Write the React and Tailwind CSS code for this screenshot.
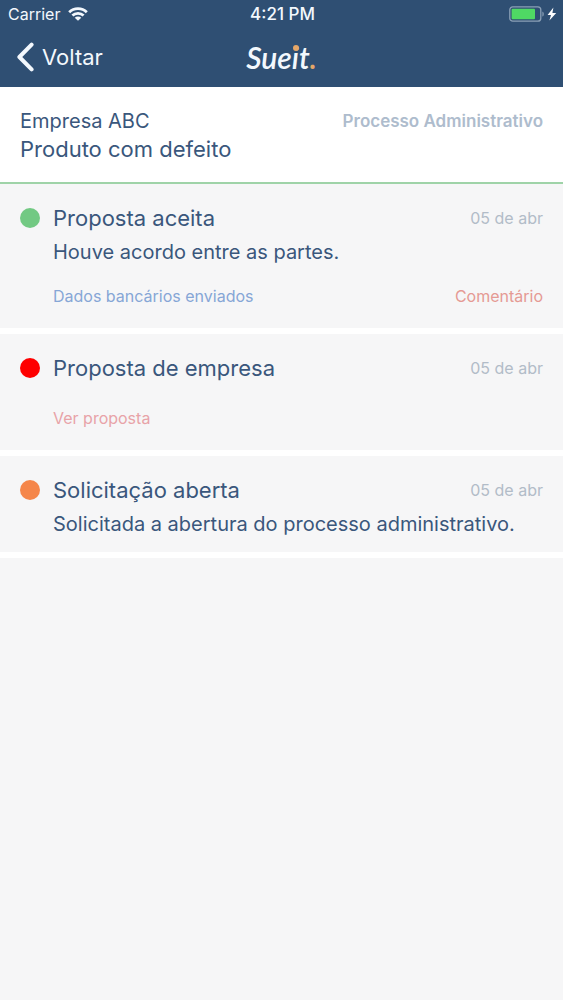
import React from 'react';

const steps = [
  {
    id: 1,
    title: 'Proposta aceita',
    description: 'Houve acordo entre as partes.',
    date: '05 de abr',
    dot: 'bg-[#72c983]',
    links: [
      { label: 'Dados bancários enviados', color: 'text-[#86a6d6]' },
      { label: 'Comentário', color: 'text-[#e59a94]' },
    ],
  },
  {
    id: 2,
    title: 'Proposta de empresa',
    date: '05 de abr',
    dot: 'bg-[#fe0000]',
    links: [{ label: 'Ver proposta', color: 'text-[#e8a3a8]' }],
  },
  {
    id: 3,
    title: 'Solicitação aberta',
    description: 'Solicitada a abertura do processo administrativo.',
    date: '05 de abr',
    dot: 'bg-[#f5864a]',
    links: [],
  },
];

function WifiIcon() {
  return (
    <svg className="h-[14px] w-[20px]" viewBox="0 0 20 14" fill="none" stroke="currentColor" strokeWidth="2.8">
      <path d="M1.2 5.2C6 0.4 14 0.4 18.8 5.2" />
      <path d="M4.4 8.6C7.5 5.6 12.5 5.6 15.6 8.6" />
      <path d="M10 13.8L6.7 10.8C8.5 9.2 11.5 9.2 13.3 10.8Z" fill="currentColor" stroke="none" />
    </svg>
  );
}

function BatteryIcon() {
  return (
    <svg className="h-[16px] w-[48px]" viewBox="0 0 48 16">
      <rect x="0.8" y="0.8" width="31" height="14.4" rx="3" fill="none" stroke="#8ba0b6" strokeWidth="1.3" />
      <rect x="2.6" y="2.8" width="23.4" height="10.4" rx="1" fill="#4fd964" />
      <path d="M33.4 5.4C35.2 6.2 35.2 9.8 33.4 10.6Z" fill="#8ba0b6" />
      <path d="M44.4 1.4L38.6 8.9H42L40.4 14.6L47.2 6.9H43.4Z" fill="#fff" />
    </svg>
  );
}

function StatusBar() {
  return (
    <div className="grid grid-cols-3 items-center pr-1.5 pl-2 h-7 text-base leading-6">
      <div className="flex items-center gap-2">
        <span>Carrier</span>
        <WifiIcon />
      </div>
      <span className="text-center text-[17px] font-medium">4:21 PM</span>
      <div className="flex justify-end">
        <BatteryIcon />
      </div>
    </div>
  );
}

function Logo() {
  return (
    <span className="relative font-['Lato',sans-serif] text-[30px] leading-8 font-semibold italic">
      Sueit<span className="text-[#e5a768]">.</span>
      <span className="absolute top-1 left-[47px] size-1.5 rounded-full bg-[#e5a768]"></span>
    </span>
  );
}

function NavBar() {
  return (
    <nav className="grid grid-cols-3 items-center px-4 pb-0.5 h-[59px]">
      <button type="button" className="flex items-center gap-2 text-[22px] leading-8">
        <svg className="h-[30px] w-[18px]" viewBox="0 0 18 30" fill="none" stroke="currentColor" strokeWidth="4" strokeLinecap="round" strokeLinejoin="round">
          <path d="M15.6 2.6L3.4 15L15.6 27.4" />
        </svg>
        Voltar
      </button>
      <div className="flex justify-center">
        <Logo />
      </div>
    </nav>
  );
}

function Step({ step }) {
  return (
    <li className="flex gap-[13px] border-b-6 border-white px-5 pt-[18px] pb-3.5">
      <span className={`mt-1.5 size-5 shrink-0 rounded-full ${step.dot}`}></span>
      <div className="min-w-0 flex-1">
        <div className="flex items-center justify-between pb-1">
          <h2 className="text-[22px] leading-8">{step.title}</h2>
          <time className="text-base leading-6 text-[#b2bcc8]">{step.date}</time>
        </div>
        {step.description && <p className="text-[20px] leading-7">{step.description}</p>}
        {step.links.length > 0 && (
          <div className="mt-[18px] mb-1.5 flex justify-between text-base leading-6">
            {step.links.map((link) => (
              <a key={link.label} href="#" className={link.color}>
                {link.label}
              </a>
            ))}
          </div>
        )}
      </div>
    </li>
  );
}

export default function App() {
  return (
    <div className="min-h-screen bg-[#f6f6f7] font-['Inter',sans-serif] text-[#3a577c]">
      <header className="bg-[#2f4f73] text-[#f3f8fd]">
        <StatusBar />
        <NavBar />
      </header>

      <section className="flex items-start justify-between border-b-2 border-[#9fd3a8] bg-white px-5 pt-5 pb-[19px]">
        <div>
          <p className="text-[20px] leading-7">Empresa ABC</p>
          <h1 className="text-[22px] leading-7">Produto com defeito</h1>
        </div>
        <p className="text-[17px] leading-7 font-semibold text-[#aebccd]">Processo Administrativo</p>
      </section>

      <ul>
        {steps.map((step) => (
          <Step key={step.id} step={step} />
        ))}
      </ul>
    </div>
  );
}
